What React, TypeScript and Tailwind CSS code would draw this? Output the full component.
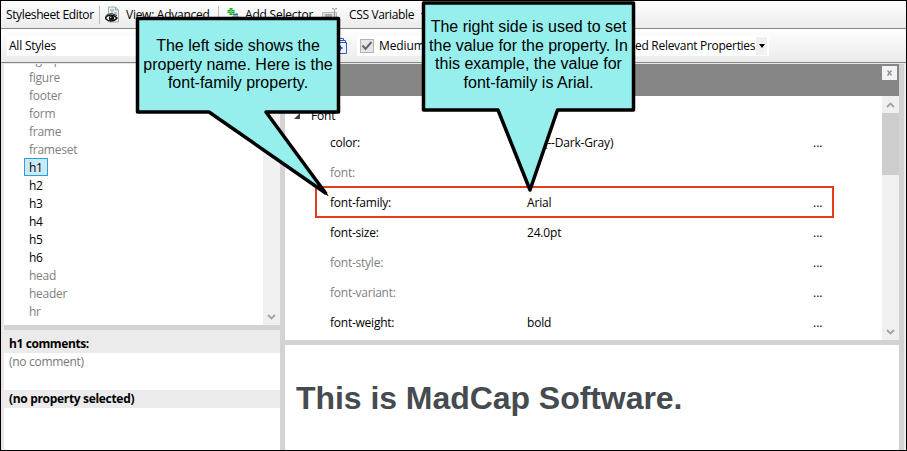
import React from "react";

const ui = "font-['Open_Sans','Noto_Sans',sans-serif]";

const tags = [
  { name: "figcaption", set: false },
  { name: "figure", set: false },
  { name: "footer", set: false },
  { name: "form", set: false },
  { name: "frame", set: false },
  { name: "frameset", set: false },
  { name: "h1", set: true },
  { name: "h2", set: true },
  { name: "h3", set: true },
  { name: "h4", set: true },
  { name: "h5", set: true },
  { name: "h6", set: true },
  { name: "head", set: false },
  { name: "header", set: false },
  { name: "hr", set: false },
];

const properties = [
  { name: "color:", value: "var(--Dark-Gray)", set: true, more: true },
  { name: "font:", value: "", set: false, more: false },
  { name: "font-family:", value: "Arial", set: true, more: true },
  { name: "font-size:", value: "24.0pt", set: true, more: true },
  { name: "font-style:", value: "", set: false, more: true },
  { name: "font-variant:", value: "", set: false, more: true },
  { name: "font-weight:", value: "bold", set: true, more: true },
];

function Chevron({ up = false }: { up?: boolean }) {
  return (
    <svg width="17" height="17" viewBox="0 0 17 17" fill="none" stroke="#a3a3a3" strokeWidth="1.8">
      <path d={up ? "M5 11 8.500 7.500 12 11" : "M5 7 8.500 10.500 12 7"} />
    </svg>
  );
}

function ViewIcon() {
  return (
    <svg width="16" height="18" viewBox="0 0 16 18">
      <path d="M3.5 1h7l3 3v12h-10z" fill="#e8f0ee" stroke="#9aaead" />
      <path d="M10.5 1v3h3M5 4h4M7 4v4M9 7h3M9 9h3" fill="none" stroke="#8fa3a6" />
      <path d="M0 12C3 8 8 8 12 12C9 16 3 16 0 12z" fill="#fff" stroke="#111" strokeWidth="1.400" />
      <path d="M.5 10C4 7 8 7 12 10" fill="none" stroke="#333" />
      <circle cx="6.500" cy="12" r="2.600" fill="#111" />
      <circle cx="5.800" cy="11.300" r=".7" fill="#ddd" />
    </svg>
  );
}

function AddIcon() {
  return (
    <svg width="13" height="16" viewBox="0 0 13 16">
      <path d="M6 7.500h5M5 10.500h7" stroke="#2a7890" strokeWidth="2" />
      <path d="M4 1v7M.5 4.500h7" stroke="#25a936" strokeWidth="3" />
      <path d="M4 2v5M1.500 4.500h5" stroke="#6adb62" />
    </svg>
  );
}

function RenameIcon() {
  return (
    <svg width="17" height="16" viewBox="0 0 17 16" fill="none">
      <path d="M.5 5.500h14v7H.5z" fill="#dedede" stroke="#b5b5b5" />
      <path d="M3 7h7v4H3z" fill="#aaa" />
      <path d="M10 1.500c2 0 2.500.5 2.500 2v9c0 1.500-.5 2-2.500 2M15 1.500c-2 0-2.500.5-2.500 2" stroke="#999" />
    </svg>
  );
}

function Divider() {
  return <div className="h-[18px] w-px bg-[#b7bcc0]" />;
}

function Toolbars() {
  return (
    <header className="shrink-0">
      <div className="flex h-[28px] items-center border-b border-[#858585] bg-linear-to-b from-white to-[#ebebeb] pl-[5px]">
        <span className="w-[93px] pt-px tracking-[-0.37px]">Stylesheet Editor</span>
        <Divider />
        <div className="ml-[5px] w-[21px]"><ViewIcon /></div>
        <span className="w-[92px] pt-px tracking-[-0.27px]">View: Advanced</span>
        <Divider />
        <div className="ml-[8px] w-[18px]"><AddIcon /></div>
        <span className="w-[77px] pt-px tracking-[-0.2px]">Add Selector</span>
        <div className="w-[27px]"><RenameIcon /></div>
        <span className="w-[72px] pt-px tracking-[-0.35px]">CSS Variable</span>
        <span className="border-x-[3.500px] border-t-[4px] border-x-transparent border-t-black" />
      </div>
      <div className="flex h-[34px] items-center border-b border-[#858585] bg-linear-to-b from-white to-[#ebebeb] pl-[6px]">
        <div className="flex h-[20px] w-[262px] items-center bg-white pl-[2px] tracking-[-0.22px]">All Styles</div>
        <svg className="ml-[62px]" width="18" height="18" viewBox="0 0 18 18" fill="none" stroke="#2857c8">
          <path d="M6.500 3.500v-2h6v2M4.500 5.500v-2h10v2M2.500 5.500h13v11h-13z" fill="#f1f5ff" />
          <path d="M9 8.500v5M6.500 11h5" strokeWidth="2" />
        </svg>
        <div className="ml-[8px] flex h-[20px] w-[412px] items-center bg-white pl-[3px]">
          <div className="flex size-[14px] shrink-0 items-center justify-center border border-[#b3b3b3] bg-[#e6e6e6]">
            <svg width="12" height="12" viewBox="0 0 12 12" fill="none" stroke="#666" strokeWidth="2"><path d="M1.500 5.500 4.500 9 10.500 2" /></svg>
          </div>
          <span className="ml-[5px] w-[256px] shrink-0 tracking-[-0.1px]">Medium</span>
          <span className="w-[121px] shrink-0 whitespace-nowrap tracking-[-0.29px]">ed Relevant Properties</span>
          <span className="flex h-[18px] w-[11px] shrink-0 items-center justify-center bg-[#f0f0f0]">
            <i className="border-x-[3px] border-t-[4px] border-x-transparent border-t-black" />
          </span>
        </div>
      </div>
    </header>
  );
}

function StylesPane() {
  return (
    <aside className="flex w-[276px] shrink-0 flex-col bg-white">
      <div className="flex h-[261px] justify-between overflow-hidden">
        <ul className="-mt-[13px] pl-[20px]">
          {tags.map((tag) => (
            <li key={tag.name} className={tag.set ? "flex h-[18px] text-black" : "flex h-[18px] text-[#808080]"}>
              <span
                className={
                  tag.name === "h1"
                    ? "-mt-px flex h-[18px] w-[24px] items-start border border-[#26a0da] bg-[#cbe8f6] pl-[4px] tracking-[-0.25px]"
                    : "flex items-center pl-[5px] tracking-[-0.25px]"
                }
              >
                {tag.name}
              </span>
            </li>
          ))}
        </ul>
        <div className="flex w-[17px] flex-col justify-end bg-[#f0f0f0]"><Chevron /></div>
      </div>
      <div className="h-[5px] bg-[#d3d3d3]" />
      <div className="flex h-[23px] items-center bg-[#ebebeb] pt-[4px] pl-[5px] font-bold tracking-[-0.4px]">h1 comments:</div>
      <div className="h-[37px] pl-[5px] text-[#777] tracking-[-0.3px]">(no comment)</div>
      <div className="flex h-[18px] items-center bg-[#ebebeb] pl-[5px] font-bold tracking-[-0.32px]">(no property selected)</div>
    </aside>
  );
}

function PropertiesPane() {
  return (
    <main className="flex w-[614px] shrink-0 flex-col bg-white">
      <div className="flex h-[32px] shrink-0 justify-end bg-[#868686] pt-[2px] pr-[2px]">
        <div className="flex h-[14px] w-[15px] items-center justify-center bg-[#f2f2f2]">
          <svg width="5" height="6" viewBox="0 0 5 6" stroke="#8793a3" strokeWidth="1.500"><path d="M.5.5 4.500 5.500M4.500.5.5 5.500" /></svg>
        </div>
      </div>
      <div className="flex h-[244px] shrink-0">
        <div className="w-[597px] pt-[11px]">
          <div className="flex h-[21px] items-center pb-[3px] pl-[8px]">
            <svg width="8" height="8" viewBox="0 0 8 8"><path d="M7 1v6H1z" fill="#404040" /></svg>
            <span className="ml-[10px] tracking-[-0.2px]">Font</span>
          </div>
          {properties.map((p) => (
            <div key={p.name} className={p.set ? "flex h-[30px] items-center pl-[45px]" : "flex h-[30px] items-center pl-[45px] text-[#808080]"}>
              <span className="w-[197px] tracking-[-0.24px]">{p.name}</span>
              <span className="w-[286px] tracking-[-0.18px]">{p.value}</span>
              {p.more && <span className="text-black">...</span>}
            </div>
          ))}
        </div>
        <div className="flex w-[17px] flex-col bg-[#f0f0f0]">
          <Chevron up />
          <div className="h-[62px] bg-[#cdcdcd]" />
          <div className="mt-auto"><Chevron /></div>
        </div>
      </div>
      <div className="h-[5px] shrink-0 bg-[#d3d3d3]" />
      <h1 className="pt-[35px] pl-[11px] font-['Liberation_Sans',Arial,sans-serif] text-[32px] leading-[37px] font-bold tracking-[-0.05px] whitespace-nowrap text-[#454b4f]">
        This is MadCap Software.
      </h1>
    </main>
  );
}

function Callouts() {
  return (
    <div className="absolute inset-0 font-['Liberation_Sans',Arial,sans-serif] text-[16px] leading-[18.500px]">
      <svg className="absolute inset-0" width="907" height="451" viewBox="0 0 907 451" fill="#96efed" stroke="#000" strokeWidth="3.500" strokeLinejoin="round">
        <path d="M137.500 18.500h201v93.500H266L325.500 193 209 112H137.500z" />
        <path d="M320 187.500 328 195.500 323 191.500z" strokeWidth="1" fill="#000" />
        <path d="M423.500 3h210v107H557.500L530 190 498 110H423.500z" />
      </svg>
      <p className="absolute top-[37px] left-[137px] w-[202px] text-center whitespace-nowrap">
        The left side shows the<br />property name. Here is the<br />font-family property.
      </p>
      <p className="absolute top-[18px] left-[423px] w-[211px] text-center whitespace-nowrap">
        The right side is used to set<br />the value for the property. In<br />this example, the value for<br />font-family is Arial.
      </p>
    </div>
  );
}

export default function App() {
  return (
    <div className={`relative flex h-[451px] w-[907px] flex-col overflow-hidden border border-black bg-[#ebe7e7] text-[12px] leading-[18px] text-black ${ui}`}>
      <Toolbars />
      <div className="flex min-h-0 grow pt-px pl-[3px]">
        <StylesPane />
        <div className="w-[5px] shrink-0 bg-[#d3d3d3]" />
        <PropertiesPane />
        <div className="w-[5px] shrink-0 bg-[#d3d3d3]" />
        <div className="grow bg-[#ebebeb]" />
      </div>
      <div className="absolute top-[185px] left-[314px] h-[32px] w-[519px] border-2 border-[#e73c19]" />
      <div className="absolute -top-px -left-px h-[451px] w-[907px]"><Callouts /></div>
    </div>
  );
}
